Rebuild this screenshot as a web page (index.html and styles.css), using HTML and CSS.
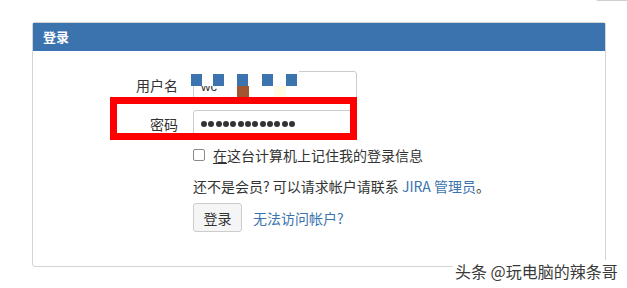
FILE: index.html
```html
<!DOCTYPE html>
<html lang="zh-CN">
<head>
<meta charset="utf-8">
<title>登录</title>
<link rel="stylesheet" href="styles.css">
</head>
<body>
<div class="topfrag"></div>
<div class="panel">
  <div class="panel-head">登录</div>
  <div class="panel-body">
    <div class="form-grid">
      <label class="lbl">用户名</label>
      <div class="input user">wc</div>
      <label class="lbl pw-lbl">密码</label>
      <div class="input pass">
        <span class="dot"></span><span class="dot"></span><span class="dot"></span><span class="dot"></span><span class="dot"></span><span class="dot"></span><span class="dot"></span><span class="dot"></span><span class="dot"></span><span class="dot"></span><span class="dot"></span><span class="dot"></span><span class="dot"></span>
      </div>
      <div class="spacer"></div>
      <div class="check-row"><span class="box"></span><span class="check-text"><u>在</u>这台计算机上记住我的登录信息</span></div>
      <div class="spacer"></div>
      <div class="note">还不是会员? 可以请求帐户请联系 <a class="link" href="#">JIRA 管理员</a>。</div>
      <div class="spacer"></div>
      <div class="actions"><button class="btn" type="button">登录</button><a class="link" href="#">无法访问帐户?</a></div>
    </div>
  </div>
</div>

<div class="mosaic">
  <span class="cell c1"></span><span class="cell c2"></span><span class="cell c3"></span><span class="cell c4"></span><span class="cell c5"></span>
</div>
<span class="cell brown"></span>
<span class="cell pale"></span>
<div class="redbox"></div>
<div class="watermark">头条 @玩电脑的辣条哥</div>
</body>
</html>
```

FILE: styles.css
```css
html, body {
  margin: 0;
  padding: 0;
  background: #fff;
}
body {
  font-family: "Noto Sans CJK SC", "Liberation Sans", sans-serif;
  color: #333;
  font-size: 14px;
  width: 627px;
  height: 288px;
  overflow: hidden;
}
.topfrag {
  margin-top: -30px;
  margin-left: 595px;
  width: 60px;
  height: 31px;
  box-sizing: border-box;
  border: 1px solid #cfcfcf;
  border-radius: 3px;
}
.panel {
  margin-top: 21px;
  margin-left: 32px;
  width: 574px;
  height: 245px;
  box-sizing: border-box;
  border: 1px solid #d4d4d4;
  border-radius: 3px;
}
.panel-head {
  height: 28px;
  line-height: 28px;
  background: #3b73af;
  color: #fff;
  font-weight: bold;
  font-size: 13px;
  padding-left: 10px;
}
.panel-body {
  padding-top: 20px;
}
.form-grid {
  display: grid;
  grid-template-columns: 145px 1fr;
  column-gap: 15px;
}
.lbl {
  text-align: right;
  line-height: 28px;
  height: 28px;
  font-size: 14px;
  color: #333;
}
.pw-lbl, .pass {
  margin-top: 11px;
}
.input {
  width: 164px;
  height: 28px;
  box-sizing: border-box;
  border: 1px solid #cccccc;
  border-radius: 3px;
  background: #fff;
}
.user {
  font-family: "Liberation Sans", sans-serif;
  font-size: 13px;
  line-height: 30px;
  padding-left: 7px;
  color: #333;
}
.pass {
  display: flex;
  align-items: center;
  padding-left: 7px;
}
.dot {
  width: 6px;
  height: 6px;
  border-radius: 50%;
  background: #333;
  margin-right: 1.33px;
  flex: none;
}
.check-row {
  margin-top: 7px;
  height: 20px;
  display: flex;
  align-items: center;
}
.box {
  width: 12px;
  height: 12px;
  box-sizing: border-box;
  border: 1.6px solid #8a8a8a;
  border-radius: 2px;
  margin-right: 8px;
  flex: none;
}
.check-text {
  line-height: 20px;
}
.check-text u {
  text-decoration-thickness: 1px;
  text-underline-offset: 2px;
}
.note {
  margin-top: 11px;
  line-height: 20px;
  white-space: nowrap;
}
.link {
  color: #3b73af;
  text-decoration: none;
}
.actions {
  margin-top: 7px;
  display: flex;
  align-items: center;
  gap: 11px;
}
.btn {
  width: 49px;
  height: 29px;
  box-sizing: border-box;
  border: 1px solid #cccccc;
  border-radius: 3px;
  background: #f5f5f5;
  color: #333;
  font-family: "Noto Sans CJK SC", sans-serif;
  font-size: 14px;
  padding: 0;
}

/* overlays */
.mosaic {
  position: absolute;
  left: 191px;
  top: 70px;
  width: 108px;
  height: 16px;
  background: #fff;
}
.mosaic .cell {
  position: absolute;
  top: 4px;
  width: 11px;
  height: 12px;
  background: #3c74b0;
}
.c1 { left: 0; width: 10px; }
.c2 { left: 22px; width: 12px; }
.c3 { left: 46px; width: 12px; }
.c4 { left: 71px; width: 12px; }
.c5 { left: 95px; width: 12px; }
.brown {
  position: absolute;
  left: 237px;
  top: 86px;
  width: 12px;
  height: 12px;
  background: #a0562f;
}
.pale {
  position: absolute;
  left: 274px;
  top: 86px;
  width: 12px;
  height: 12px;
  background: #fffbe4;
}
.redbox {
  position: absolute;
  left: 110px;
  top: 97px;
  width: 247px;
  height: 43px;
  box-sizing: border-box;
  border: 7px solid #ff0000;
}
.watermark {
  position: absolute;
  left: 453px;
  top: 260px;
  padding: 0 2px;
  height: 22px;
  line-height: 22px;
  font-size: 16px;
  color: #3a3a3a;
  background: #fff;
  white-space: nowrap;
}
```
